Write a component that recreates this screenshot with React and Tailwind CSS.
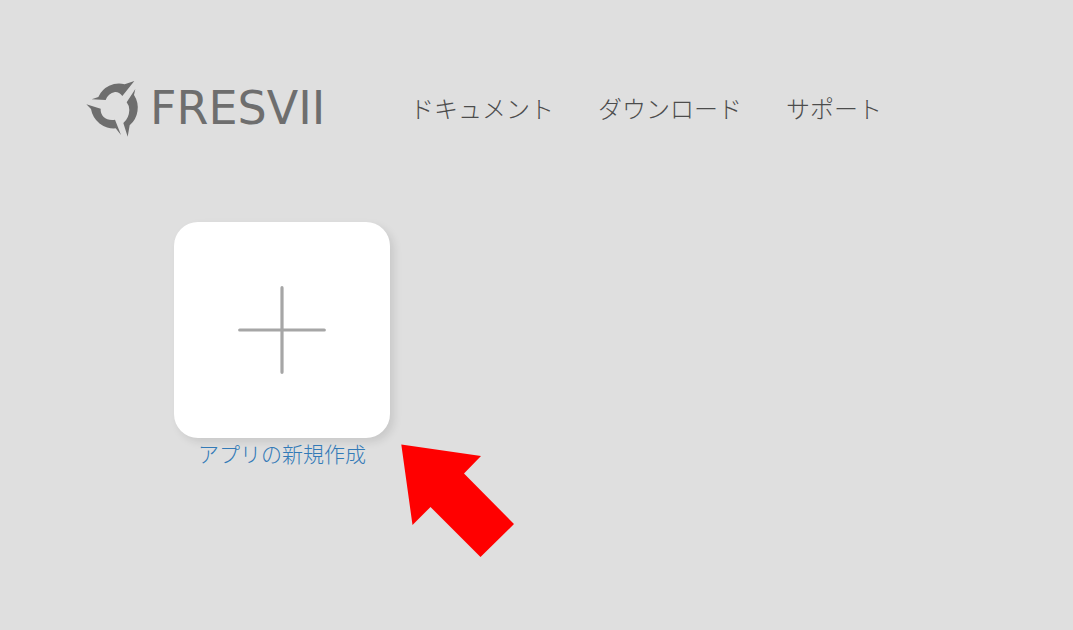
const navItems = [
  { label: "ドキュメント", href: "#docs" },
  { label: "ダウンロード", href: "#download" },
  { label: "サポート", href: "#support" },
];

function LogoMark() {
  return (
    <svg viewBox="0 0 198 204" className="h-[68px] w-[66px] shrink-0" fill="#6e6e6e" aria-hidden="true">
      <path d="M163 21 L127 66 Q117 53 105 54 Q84 58 77 78 L35 76 L55 69 A68 68 0 0 1 134 31 Z" />
      <path d="M166 45 L162 63 A70 70 0 0 1 149 154 L143 188 L130 147 Q147 133 148 108 Q148 95 140 85 Z" />
      <path d="M19 91 L62 104 Q61 119 71 129 Q83 140 105 137 L123 183 L107 163 A69 69 0 0 1 33 105 Z" />
    </svg>
  );
}

function Header() {
  return (
    <header className="flex items-center pl-20">
      <a href="#home" className="flex items-center gap-1 text-[#6e6e6e]" aria-label="FRESVII">
        <LogoMark />
        <span className="w-[260px] font-['DejaVu_Sans',sans-serif] text-[46px] leading-[68px]">FRESVII</span>
      </a>
      <nav className="flex gap-11 text-2xl font-light whitespace-nowrap text-[#4c4c4c]">
        {navItems.map((item) => (
          <a key={item.href} href={item.href}>
            {item.label}
          </a>
        ))}
      </nav>
    </header>
  );
}

function NewAppCard() {
  return (
    <a href="#new-app" className="flex w-[216px] flex-col items-center">
      <span className="flex aspect-square w-full items-center justify-center rounded-3xl bg-white shadow-[4px_4px_8px_rgba(0,0,0,0.1)]">
        <svg viewBox="0 0 88 88" className="size-[88px]" stroke="#a6a6a6" strokeWidth="3.2" strokeLinecap="round" aria-hidden="true">
          <path d="M44 1.7V86.3M1.7 44H86.3" />
        </svg>
      </span>
      <span className="text-[21px] leading-[30px] font-light whitespace-nowrap text-[#337ab7]">アプリの新規作成</span>
    </a>
  );
}

export default function App() {
  return (
    <div className="min-h-screen bg-[#dfdfdf] pt-[74px] font-['Noto_Sans_CJK_JP',sans-serif]">
      <Header />
      <main className="relative mt-20 ml-[174px] w-fit">
        <NewAppCard />
        <svg viewBox="0 0 114 114" className="absolute top-[222px] left-[227px] size-[114px]" fill="#ff0000" aria-hidden="true">
          <path d="M0.3 0.5 L80 12 L63 29.5 L113 80 L79.5 113 L29.5 63 L11.5 81 Z" />
        </svg>
      </main>
    </div>
  );
}
